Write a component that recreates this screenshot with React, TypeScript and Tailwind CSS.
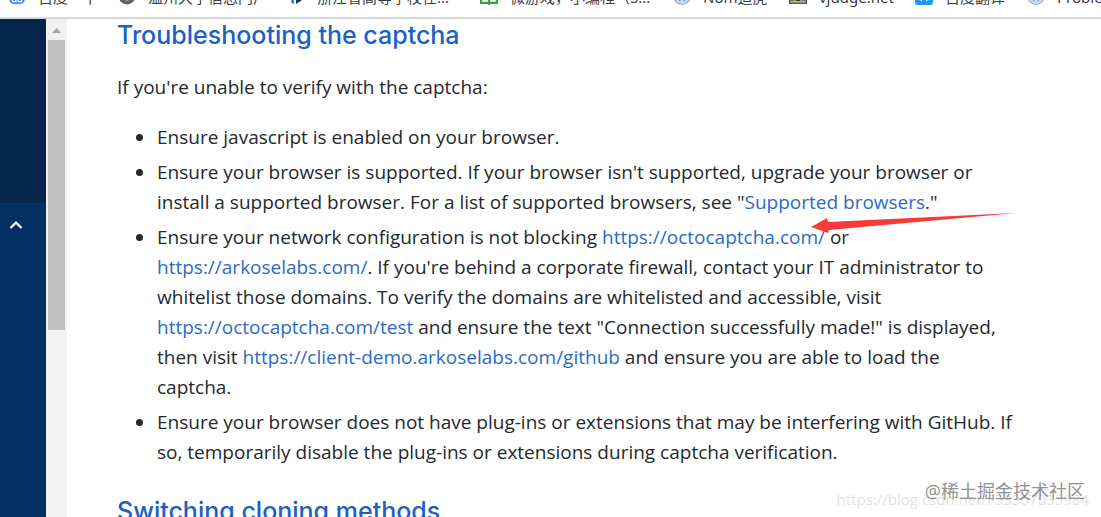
import type { ReactNode } from "react";

const bookmarks: { label: string; icon: ReactNode; width: string }[] = [
  { label: "百度一下", width: "w-[110px]", icon: <><rect x="1" y="0" width="14" height="15" rx="4" fill="#4285f4" /><path d="M4 9h3v4H4zM9 9h3v4H9z" fill="none" stroke="#fff" strokeWidth="1.2" /></> },
  { label: "温州大学信息门户", width: "w-[169px]", icon: <><circle cx="8" cy="8" r="7.5" fill="#5f6368" /><path d="M3 6c3 0 4 2 6 3 2 0 2-3 5-3-1 3-3 6-6 6S4 9 3 6z" fill="#fff" /></> },
  { label: "浙江省高等学校在...", width: "w-[193px]", icon: <><path d="M1 4l5 2v9l-2-1v-3l-3-1z" fill="#1565a9" /><path d="M8 3h5v9l-5 3z" fill="#063f70" /></> },
  { label: "微游戏，小编程（S...", width: "w-[193px]", icon: <><path d="M1 2h6l1 2 1-2h6v12H9l-1 1-1-1H1z" fill="#fff" stroke="#32a63f" strokeWidth="2" /><path d="M8 3v11M3 9h3M10 9h3" stroke="#32a63f" strokeWidth="2" /></> },
  { label: "Nom追虎", width: "w-[116px]", icon: <><circle cx="8" cy="8" r="7.5" fill="#c7d9ef" stroke="#8dabd4" /><path d="M4 9l2 3 2-3 2 3 2-3" stroke="#7798c8" fill="none" /></> },
  { label: "vjudge.net", width: "w-[126px]", icon: <><rect width="16" height="15" fill="#444" /><path d="M1 12h14v2H1z" fill="#aaa" /><circle cx="8" cy="9" r="4" fill="#282b10" stroke="#bbc44c" /></> },
  { label: "百度翻译", width: "w-[112px]", icon: <><rect width="16" height="16" rx="3" fill="#2196f3" /><path d="M5 12l2-4M9 7l2 5" stroke="#fff" strokeWidth="2" /></> },
  { label: "Problems", width: "w-[116px]", icon: <><circle cx="8" cy="8" r="7.5" fill="#cbd6f2" stroke="#a6afdd" /><path d="M4 9l2 3 2-3 2 3 2-3" stroke="#8297cf" fill="none" /></> },
];

function TextLink({ href, children }: { href: string; children: ReactNode }) {
  return <a href={href} className="text-[#2a6bc9]">{children}</a>;
}

const tips: ReactNode[] = [
  <>Ensure javascript is enabled on your browser.</>,
  <>Ensure your browser is supported. If your browser isn't supported, upgrade your browser or<br />install a supported browser. For a list of supported browsers, see "<TextLink href="#browsers">Supported browsers</TextLink>."</>,
  <>Ensure your network configuration is not blocking <TextLink href="https://octocaptcha.com/">https://octocaptcha.com/</TextLink> or<br /><TextLink href="https://arkoselabs.com/">https://arkoselabs.com/</TextLink>. If you're behind a corporate firewall, contact your IT administrator to<br />whitelist those domains. To verify the domains are whitelisted and accessible, visit<br /><TextLink href="https://octocaptcha.com/test">https://octocaptcha.com/test</TextLink> and ensure the text "Connection successfully made!" is displayed,<br />then visit <TextLink href="https://client-demo.arkoselabs.com/github">https://client-demo.arkoselabs.com/github</TextLink> and ensure you are able to load the<br />captcha.</>,
  <>Ensure your browser does not have plug-ins or extensions that may be interfering with GitHub. If<br />so, temporarily disable the plug-ins or extensions during captcha verification.</>,
];

export default function App() {
  return (
    <div className="relative flex h-screen flex-col overflow-hidden bg-white font-['Open_Sans','Noto_Sans_CJK_SC',sans-serif] text-[#24292e]">
      <nav aria-label="Bookmarks" className="flex h-[19px] shrink-0 overflow-hidden border-b-2 border-[#d5d7da] pl-2 font-['Noto_Sans','Noto_Sans_CJK_SC',sans-serif]">
        {bookmarks.map((b) => (
          <a key={b.label} href="#" className={`-mt-[13px] flex h-5 shrink-0 items-start gap-3 text-[15px] leading-5 whitespace-nowrap text-[#3c4043] ${b.width}`}>
            <svg viewBox="0 0 16 16" className="size-[18px] shrink-0">{b.icon}</svg>
            <span>{b.label}</span>
          </a>
        ))}
      </nav>
      <div className="flex min-h-0 flex-1">
        <aside className="flex w-[46px] shrink-0 flex-col bg-[#032f62]">
          <div className="h-[184px] bg-[#05264c]" />
          <button aria-label="Collapse section" className="flex h-11 w-8 items-center justify-center text-white">
            <svg viewBox="0 0 14 10" className="h-[10px] w-[14px]"><path d="M1.5 8L7 2.5 12.5 8" fill="none" stroke="currentColor" strokeWidth="2.2" /></svg>
          </button>
        </aside>
        <div className="flex w-[21px] shrink-0 flex-col items-center bg-[#f1f1f1]">
          <svg viewBox="0 0 21 21" className="size-[21px] shrink-0"><path d="M6 14l4.500-5L15 14z" fill="#a3a3a3" /></svg>
          <div className="h-[290px] w-[17px] bg-[#c1c1c1]" />
        </div>
        <main className="min-w-0 flex-1 overflow-hidden pr-20 pl-[50px]">
          <h2 className="font-[Inter] text-[25px] leading-8 font-medium text-[#1b60c5]"><a href="#captcha">Troubleshooting the captcha</a></h2>
          <p className="mt-[21px] text-[19px] leading-[30px]">If you're unable to verify with the captcha:</p>
          <ul className="mt-5 flex list-none flex-col gap-[5px] text-[19px] leading-[30px]">
            {tips.map((item, i) => (
              <li key={i} className="flex pl-[19px]">
                <span aria-hidden="true" className="mt-3 mr-3.5 size-[7px] shrink-0 rounded-full bg-[#24292e]" />
                <div className="whitespace-nowrap">{item}</div>
              </li>
            ))}
          </ul>
          <h2 className="mt-7 font-[Inter] text-[25px] leading-8 font-medium text-[#1b60c5]"><a href="#cloning">Switching cloning methods</a></h2>
        </main>
      </div>
      <svg aria-hidden="true" viewBox="0 0 206 24" className="absolute top-[211px] left-[811px] h-6 w-[206px]"><path d="M0 16L16 7l1 4L205 2 18 19l-1 3z" fill="#f73a37" /></svg>
      <p className="absolute right-3 bottom-2 text-[15px] leading-5 text-[#e2e2e2]">https://blog.csdn.net/F53367035984</p>
      <p className="absolute right-4 bottom-3 text-lg leading-7 text-[#929292]">@稀土掘金技术社区</p>
    </div>
  );
}
